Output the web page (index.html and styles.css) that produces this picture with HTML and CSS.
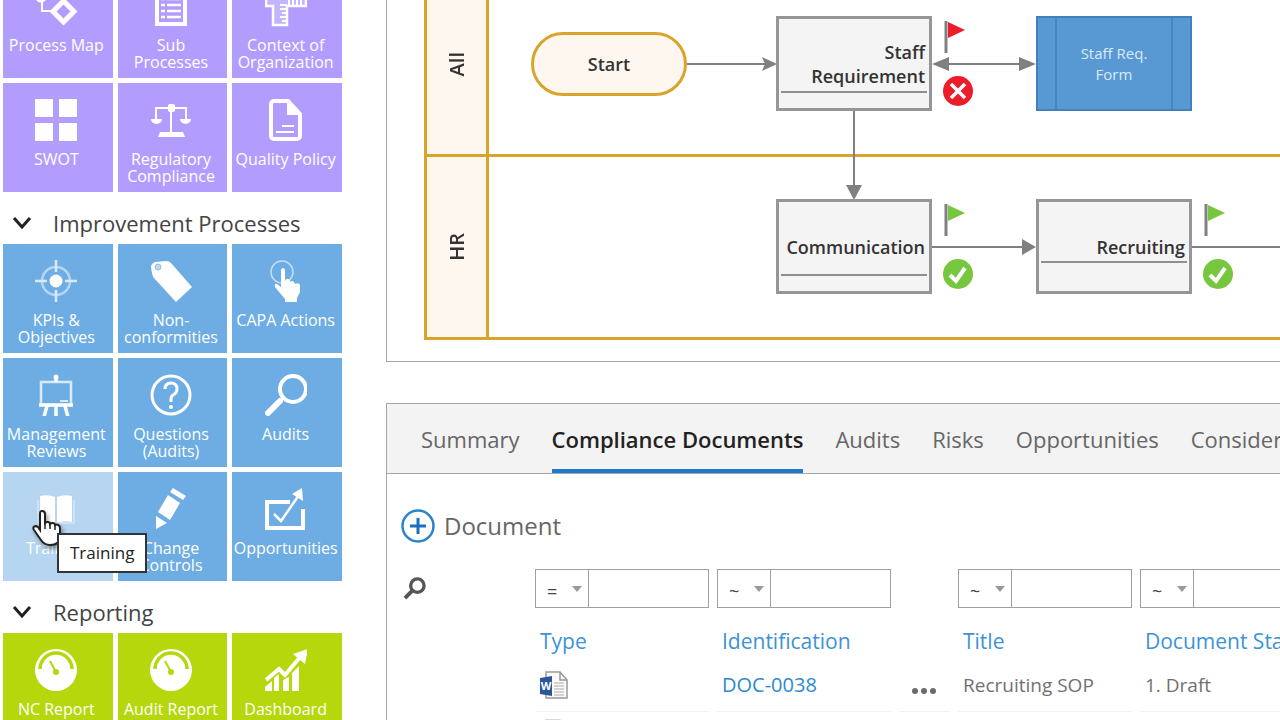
FILE: index.html
```html
<!DOCTYPE html>
<html lang="en">
<head>
    <meta charset="UTF-8">
    <meta name="viewport" content="width=device-width, initial-scale=1.0">
    <title>Process Management</title>
    <link rel="stylesheet" href="styles.css">
</head>
<body>
    <div class="app">
        <nav class="sidebar">
            <div class="tiles purple scrolled">
                <a class="tile" href="#">
                    <svg class="icon" viewBox="0 0 42 42"><circle cx="6" cy="12" r="4" fill="none" stroke="#fff" stroke-width="3"/><path d="M7 17v9h12" fill="none" stroke="#fff" stroke-width="2"/><path d="M28.500 16L39 26.500L28.500 37L18 26.500z" fill="none" stroke="#fff" stroke-width="5"/></svg>
                    <span>Process Map</span>
                </a>
                <a class="tile" href="#">
                    <svg class="icon" viewBox="0 0 42 42"><rect x="7" y="3" width="28" height="36" fill="none" stroke="#fff" stroke-width="4"/><path d="M11 14h4M17 14h14M11 20h4M17 20h14M11 26h4M17 26h14M11 32h4M17 32h14" stroke="#fff" stroke-width="2.500"/></svg>
                    <span>Sub<br>Processes</span>
                </a>
                <a class="tile" href="#">
                    <svg class="icon" viewBox="0 0 42 42"><path d="M1 7h40v14H22v19H8V21H1z" fill="rgba(255,255,255,.25)" stroke="#fff" stroke-width="2.500"/><path d="M15 20h7M15 24h7M17 28h5M15 32h7M17 36h5M24 11v10M28 13v8M32 11v10M36 13v8" stroke="#fff" stroke-width="2"/></svg>
                    <span>Context of<br>Organization</span>
                </a>
                <a class="tile" href="#">
                    <svg class="icon" viewBox="0 0 42 42"><path d="M0 0h18v18H0zM24 0h18v18H24zM0 24h18v18H0zM24 24h18v18H24z" fill="#fff"/></svg>
                    <span>SWOT</span>
                </a>
                <a class="tile" href="#">
                    <svg class="icon" viewBox="0 0 42 42"><path d="M6 20V9h30v11M21 6v29" fill="none" stroke="#fff" stroke-width="2"/><rect x="18" y="5" width="7" height="8" rx="2" fill="#fff"/><path d="M1 20h11a5.500 5 0 0 1-11 0zM30 20h11a5.500 5 0 0 1-11 0zM10 33h23l2 5H8z" fill="#fff"/></svg>
                    <span>Regulatory<br>Compliance</span>
                </a>
                <a class="tile" href="#">
                    <svg class="icon" viewBox="0 0 42 42"><path d="M9 2h14l12 13v22a3 3 0 0 1-3 3H9a3 3 0 0 1-3-3V5a3 3 0 0 1 3-3z" fill="none" stroke="#fff" stroke-width="4"/><path d="M22 2l13 14H22z" fill="#fff"/><path d="M17 27h12M11 33h18" stroke="#fff" stroke-width="2"/></svg>
                    <span>Quality Policy</span>
                </a>
            </div>

            <button class="group" type="button">
                <svg class="chevron" viewBox="0 0 20 14"><path d="M2 2l8 9 8-9" fill="none" stroke="#222" stroke-width="3"/></svg>
                Improvement Processes
            </button>
            <div class="tiles blue">
                <a class="tile" href="#">
                    <svg class="icon" viewBox="0 0 42 42"><circle cx="21" cy="21" r="14" fill="none" stroke="#b7d6f3" stroke-width="2.500"/><path d="M21 0v12M21 30v12M0 21h12M30 21h12" stroke="#d8e9f9" stroke-width="2.500"/><circle cx="21" cy="21" r="6.500" fill="#fff"/></svg>
                    <span>KPIs &amp;<br>Objectives</span>
                </a>
                <a class="tile" href="#">
                    <svg class="icon" viewBox="0 0 42 42"><path d="M1 7Q1 4 5 2l11-1q3 0 5 2l21 24-16 15L4 18q-2-2-3-11z" fill="#fff"/><circle cx="8" cy="7" r="3" fill="#b9d8f3" stroke="#8fc0eb"/></svg>
                    <span>Non-<br>conformities</span>
                </a>
                <a class="tile" href="#">
                    <svg class="icon" viewBox="0 0 42 42"><circle cx="17" cy="12" r="11" fill="none" stroke="#c3ddf5" stroke-width="1.500"/><path d="M18 8q2 0 2 3v10q1-3 3-2 2 0 2 3 2-2 4 0l1 2q4-2 5 1v7l-3 6v4H20v-3L10 27q-1-4 2-3l4 3V11q0-3 2-3z" fill="#fff"/></svg>
                    <span>CAPA Actions</span>
                </a>
                <a class="tile" href="#">
                    <svg class="icon" viewBox="0 0 42 42"><path d="M6 8h30v23H6z" fill="none" stroke="#d8e9f9" stroke-width="2.500"/><path d="M25 27h8" stroke="#d8e9f9" stroke-width="2"/><circle cx="21" cy="3" r="2.500" fill="#fff"/><path d="M21 4v4M4 31h34M12 32l-3 11M21 32v10M30 32l3 11" stroke="#fff" stroke-width="3.500"/></svg>
                    <span>Management<br>Reviews</span>
                </a>
                <a class="tile" href="#">
                    <svg class="icon" viewBox="0 0 42 42"><circle cx="21" cy="21" r="19" fill="none" stroke="#fff" stroke-width="3"/><path d="M15 15q0-6 6-6t6 6q0 4-4 6-2 1-2 5v2" fill="none" stroke="#fff" stroke-width="3"/><circle cx="21" cy="33" r="2" fill="#fff"/></svg>
                    <span>Questions<br>(Audits)</span>
                </a>
                <a class="tile" href="#">
                    <svg class="icon" viewBox="0 0 42 42"><circle cx="28" cy="15" r="13" fill="none" stroke="#fff" stroke-width="4"/><path d="M3 39l12-12" stroke="#fff" stroke-width="6" stroke-linecap="round"/><path d="M15 27l4-4" stroke="#fff" stroke-width="3"/></svg>
                    <span>Audits</span>
                </a>
                <a class="tile hovered" href="#">
                    <svg class="icon" viewBox="0 0 42 42"><path d="M5 8q8-2 15 1v26q-7-3-15-1zM22 9q7-3 15-1v26q-8-2-15 1z" fill="#fff"/><path d="M3 12v23h36V12" fill="none" stroke="#d3e6f7" stroke-width="1.500"/></svg>
                    <span>Training</span>
                    <svg class="pointer" viewBox="0 0 30 38"><path d="M10 2c2 0 3 1 3 3v9c2-2 5-1 5 1 2-2 5-1 5 1 2-1 5 0 5 3v8c0 6-4 9-10 9-5 0-7-2-9-5L2 21c-2-3 1-5 4-3l2 3V5c0-2 0-3 2-3z" fill="#fff" stroke="#222" stroke-width="2"/><path d="M13 13v7M18 14v6M23 16v5" stroke="#222" stroke-width="1.500"/></svg>
                    <span class="tooltip" role="tooltip">Training</span>
                </a>
                <a class="tile" href="#">
                    <svg class="icon" viewBox="0 0 42 42"><path d="M23 0l13 8-3 4-13-8zM18 7l12 8-10 17-12-8zM6 28l11 7-11 6z" fill="#fff"/></svg>
                    <span>Change<br>Controls</span>
                </a>
                <a class="tile" href="#">
                    <svg class="icon" viewBox="0 0 42 42"><path d="M25 14H2v26h36V21" fill="none" stroke="#fff" stroke-width="4"/><path d="M9 26l7 7L34 7" fill="none" stroke="#fff" stroke-width="2.500"/><path d="M37 0l1 13-11-7z" fill="#fff"/></svg>
                    <span>Opportunities</span>
                </a>
            </div>

            <button class="group" type="button">
                <svg class="chevron" viewBox="0 0 20 14"><path d="M2 2l8 9 8-9" fill="none" stroke="#222" stroke-width="3"/></svg>
                Reporting
            </button>
            <div class="tiles green">
                <a class="tile" href="#">
                    <svg class="icon" viewBox="0 0 42 42"><circle cx="21" cy="21" r="21" fill="#fff"/><path d="M5 20a16 16 0 0 1 32 0" fill="none" stroke="#b5d70b" stroke-width="3.500"/><path d="M15 12l6 11" stroke="#b5d70b" stroke-width="2"/><circle cx="21" cy="23" r="3" fill="#b5d70b"/></svg>
                    <span>NC Report</span>
                </a>
                <a class="tile" href="#">
                    <svg class="icon" viewBox="0 0 42 42"><circle cx="21" cy="21" r="21" fill="#fff"/><path d="M5 20a16 16 0 0 1 32 0" fill="none" stroke="#b5d70b" stroke-width="3.500"/><path d="M15 12l6 11" stroke="#b5d70b" stroke-width="2"/><circle cx="21" cy="23" r="3" fill="#b5d70b"/></svg>
                    <span>Audit Report</span>
                </a>
                <a class="tile" href="#">
                    <svg class="icon" viewBox="0 0 42 42"><path d="M1 31l13-11 6 6L36 7" fill="none" stroke="#fff" stroke-width="4"/><path d="M43 0l-3 15L28 5zM0 38l7-6v11H0zM9 29l5-4v18H9zM18 31l6-3v15h-6zM27 24l7-7v26h-7z" fill="#fff"/></svg>
                    <span>Dashboard</span>
                </a>
            </div>
        </nav>

        <main class="content">
            <section class="diagram">
                <div class="lane"><div class="lane-name"><span>All</span></div></div>
                <div class="lane"><div class="lane-name"><span>HR</span></div></div>

                <!-- connectors -->
                <svg class="links" viewBox="0 0 900 340" width="900" height="340">
                    <g fill="none" stroke="#808080" stroke-width="2">
                        <path d="M300 64h78M556 64h82M467 111v78M545 247h92M804 247h96"/>
                    </g>
                    <path d="M390 64l-15-7 3 7-3 7zM545 64l17-7v14zM649 64l-17-7v14zM467 200l-8-15h16zM649 247l-14-8v16z" fill="#808080"/>
                </svg>

                <div class="node start">Start</div>
                <div class="node task requirement">Staff<br>Requirement</div>
                <div class="node form">Staff Req.<br>Form</div>
                <div class="node task communication">Communication</div>
                <div class="node task recruiting">Recruiting</div>

                <svg class="status status-1" viewBox="0 0 30 88"><path d="M3 3v32" stroke="#808080" stroke-width="3"/><path d="M5 4l17 8-17 8z" fill="#ec1c2a"/><circle cx="15" cy="73" r="15" fill="#ec1c2a"/><path d="M8 66l14 14M22 66L8 80" stroke="#fff" stroke-width="3.500"/></svg>
                <svg class="status status-2" viewBox="0 0 30 88"><path d="M3 3v32" stroke="#808080" stroke-width="3"/><path d="M5 4l17 8-17 8z" fill="#76c63e"/><circle cx="15" cy="73" r="15" fill="#76c63e"/><path d="M7 74l6 6 9-13" fill="none" stroke="#fff" stroke-width="4"/></svg>
                <svg class="status status-3" viewBox="0 0 30 88"><path d="M3 3v32" stroke="#808080" stroke-width="3"/><path d="M5 4l17 8-17 8z" fill="#76c63e"/><circle cx="15" cy="73" r="15" fill="#76c63e"/><path d="M7 74l6 6 9-13" fill="none" stroke="#fff" stroke-width="4"/></svg>
            </section>

            <section class="details">
                <nav class="tabs">
                    <a href="#">Summary</a>
                    <a href="#" class="active">Compliance Documents</a>
                    <a href="#">Audits</a>
                    <a href="#">Risks</a>
                    <a href="#">Opportunities</a>
                    <a href="#">Considerations</a>
                </nav>
                <button class="add" type="button">
                    <svg class="plus" viewBox="0 0 34 34"><circle cx="17" cy="17" r="15.500" fill="none" stroke="#2b83cb" stroke-width="2.500"/><path d="M17 9v16M9 17h16" stroke="#1b6fc0" stroke-width="3"/></svg>
                    Document
                </button>
                <table class="docs">
                    <colgroup>
                        <col class="col-tools">
                        <col class="col-field">
                        <col class="col-field">
                        <col class="col-more">
                        <col class="col-field">
                        <col class="col-field">
                    </colgroup>
                    <thead>
                        <tr class="filters">
                            <td><button class="search" type="button" aria-label="Search"><svg viewBox="0 0 24 24"><circle cx="15" cy="9" r="7" fill="none" stroke="#555" stroke-width="3.500"/><path d="M10 14l-8 8" stroke="#555" stroke-width="4"/></svg></button></td>
                            <td><div class="filter"><select aria-label="Type operator"><option>=</option></select><input type="text" aria-label="Type filter"></div></td>
                            <td><div class="filter"><select aria-label="Identification operator"><option>~</option></select><input type="text" aria-label="Identification filter"></div></td>
                            <td></td>
                            <td><div class="filter"><select aria-label="Title operator"><option>~</option></select><input type="text" aria-label="Title filter"></div></td>
                            <td><div class="filter"><select aria-label="Status operator"><option>~</option></select><input type="text" aria-label="Status filter"></div></td>
                        </tr>
                        <tr class="heads">
                            <td></td>
                            <th scope="col">Type</th>
                            <th scope="col">Identification</th>
                            <td></td>
                            <th scope="col">Title</th>
                            <th scope="col">Document Status</th>
                        </tr>
                    </thead>
                    <tbody>
                        <tr>
                            <td></td>
                            <td><svg class="word" viewBox="0 0 28 28"><path d="M6 1h14l7 8v18H6z" fill="#fafafa" stroke="#999" stroke-width="1.500"/><path d="M20 1v8h7" fill="none" stroke="#999" stroke-width="1.500"/><path d="M14 12h10M14 15h10M14 18h10M14 21h10M14 24h10" stroke="#aaa"/><path d="M0 7l12-2v20L0 23z" fill="#2b579a"/><text x="6" y="19" class="word-mark">W</text></svg></td>
                            <td><a href="#">DOC-0038</a></td>
                            <td><button class="more" type="button" aria-label="More"><svg viewBox="0 0 24 6"><g fill="#6b6b6b"><circle cx="3" cy="3" r="3"/><circle cx="12" cy="3" r="3"/><circle cx="21" cy="3" r="3"/></g></svg></button></td>
                            <td>Recruiting SOP</td>
                            <td>1. Draft</td>
                        </tr>
                        <tr>
                            <td></td>
                            <td><svg class="word" viewBox="0 0 28 28"><path d="M6 1h14l7 8v18H6z" fill="#fafafa" stroke="#ccc" stroke-width="1.500"/></svg></td>
                            <td></td>
                            <td></td>
                            <td></td>
                            <td></td>
                        </tr>
                    </tbody>
                </table>
            </section>
        </main>
    </div>
</body>
</html>
```

FILE: styles.css
```css
* {
    box-sizing: border-box;
}
body {
    margin: 0;
    background: #fff;
    color: #444;
    font-family: "Open Sans", "Noto Sans", sans-serif;
    overflow: hidden;
}
a {
    text-decoration: none;
}
button {
    border: none;
    background: none;
    padding: 0;
    font-family: inherit;
    cursor: pointer;
}
.app {
    display: flex;
    gap: 44px;
    height: 100vh;
    overflow: hidden;
}

/* sidebar */
.sidebar {
    flex: 0 0 342px;
    padding-left: 3px;
}
.tiles {
    display: grid;
    grid-template-columns: repeat(3, 1fr);
    gap: 5px;
}
.tiles.scrolled {
    margin-top: -31px;
}
.tile {
    display: flex;
    flex-direction: column;
    align-items: center;
    gap: 10px;
    height: 109px;
    padding: 16px 3px 0 0;
    position: relative;
    color: #fff;
    font-size: 16px;
    line-height: 17px;
    text-align: center;
    white-space: nowrap;
}
.purple .tile { background: #b29dff; }
.blue .tile { background: #6eade3; }
.green .tile { background: #b5d70b; }
.blue .tile.hovered { background: #b6d5f1; }
.icon {
    width: 42px;
    height: 42px;
}
.group {
    display: flex;
    align-items: center;
    gap: 21px;
    width: 100%;
    height: 52px;
    padding: 10px 0 0 9px;
    color: #444;
    font-size: 22px;
    line-height: 42px;
}
.chevron {
    width: 20px;
    height: 14px;
}

/* hover state of the tile */
.pointer {
    position: absolute;
    left: 29px;
    top: 37px;
    width: 30px;
    height: 38px;
    z-index: 2;
    filter: drop-shadow(2px 3px 2px rgba(0, 0, 0, 0.4));
}
.tooltip {
    position: absolute;
    left: 54px;
    top: 61px;
    z-index: 3;
    padding: 0 11px;
    background: #fff;
    border: 2px solid #333;
    color: #222;
    font-size: 17px;
    line-height: 36px;
}

/* process diagram */
.content {
    flex: 1;
    min-width: 0;
}
.diagram {
    position: relative;
    padding: 0 0 21px 37px;
    border: solid #a6a6a6;
    border-width: 0 0 1px 1px;
    overflow: hidden;
}
.lane {
    display: flex;
    height: 183px;
    border: solid #d8a52c;
    border-width: 0 0 3px 3px;
}
.lane:first-child {
    margin-top: -26px;
}
.lane-name {
    display: flex;
    align-items: center;
    justify-content: center;
    width: 62px;
    background: #fef7f0;
    border-right: 3px solid #d8a52c;
    color: #333;
    font-size: 20px;
    font-weight: 600;
}
.lane-name span {
    writing-mode: vertical-rl;
    transform: rotate(180deg);
}
.links {
    position: absolute;
    left: 0;
    top: 0;
}
.node {
    position: absolute;
    display: flex;
    align-items: center;
    width: 156px;
    height: 95px;
    color: #333;
    font-size: 18px;
    font-weight: 600;
    line-height: 24px;
}
.start {
    left: 144px;
    top: 32px;
    height: 64px;
    justify-content: center;
    background: #fef7f0;
    border: 3px solid #d8a52c;
    border-radius: 32px;
}
.task {
    justify-content: flex-end;
    padding-right: 4px;
    background: #f4f4f5;
    border: 3px solid #969696;
    text-align: right;
}
.task::after {
    content: '';
    position: absolute;
    left: 2px;
    right: 2px;
    bottom: 15px;
    height: 2px;
    background: #8f8f8f;
}
.requirement {
    left: 389px;
    top: 16px;
}
.communication {
    left: 389px;
    top: 199px;
}
.recruiting {
    left: 649px;
    top: 199px;
}
.recruiting::after {
    bottom: 28px;
}
.form {
    left: 649px;
    top: 16px;
    justify-content: center;
    background: #5899d3;
    border: 2px solid #3f80bd;
    color: #d9ebfa;
    font-size: 15px;
    font-weight: 400;
    line-height: 21px;
    text-align: center;
}
.form::before {
    content: '';
    position: absolute;
    inset: 0 17px;
    border: solid #4486c3;
    border-width: 0 2px;
}
.status {
    position: absolute;
    width: 30px;
    height: 88px;
}
.status-1 { left: 556px; top: 18px; }
.status-2 { left: 556px; top: 201px; }
.status-3 { left: 816px; top: 201px; }

/* details panel */
.details {
    margin-top: 41px;
    height: 400px;
    border: solid #a6a6a6;
    border-width: 1px 0 0 1px;
    overflow: hidden;
}
.tabs {
    display: flex;
    gap: 32px;
    height: 70px;
    padding-left: 34px;
    background: #f3f3f3;
    border-bottom: 1px solid #a6a6a6;
    white-space: nowrap;
}
.tabs a {
    border-bottom: 4px solid transparent;
    color: #666;
    font-size: 22px;
    line-height: 70px;
}
.tabs a.active {
    border-color: #1e78cc;
    color: #222;
    font-weight: 600;
}
.add {
    display: flex;
    align-items: center;
    gap: 9px;
    margin: 32px 0 0 14px;
    color: #666;
    font-size: 24px;
    line-height: 40px;
}
.plus {
    width: 34px;
    height: 34px;
}
.docs {
    width: 929px;
    margin: 23px 0 0 6px;
    table-layout: fixed;
    border-collapse: separate;
    border-spacing: 8px 0;
    color: #707070;
    font-size: 19px;
}
.col-tools { width: 126px; }
.col-field { width: 174px; }
.col-more { width: 51px; }
.docs td,
.docs th {
    padding: 0;
    text-align: left;
    white-space: nowrap;
}
.docs .heads th {
    padding: 10px 0 0 5px;
    color: #3c93d6;
    font-size: 21px;
    font-weight: 400;
}
.heads {
    height: 56px;
}
.docs tbody td {
    height: 48px;
    padding: 7px 0 0 5px;
    vertical-align: top;
    line-height: 28px;
}
.docs tbody td:not(:first-child) {
    border-bottom: 1px solid #f2f2f2;
}
.docs tbody a {
    color: #2d8ad0;
    font-size: 20px;
}
.search,
.more {
    display: block;
}
.search svg {
    display: block;
    width: 23px;
    height: 23px;
    margin-left: 2px;
}
.more svg {
    display: block;
    width: 24px;
    height: 6px;
    margin: 17px 0 0 8px;
}
.filter {
    display: flex;
    height: 39px;
    border: 1px solid #a0a0a0;
    position: relative;
}
.filter select {
    appearance: none;
    width: 53px;
    padding: 4px 0 0 11px;
    border: none;
    border-right: 1px solid #a0a0a0;
    border-radius: 0;
    background: #fff;
    color: #444;
    font-family: inherit;
    font-size: 18px;
}
.filter input {
    flex: 1;
    min-width: 0;
    padding: 0 6px;
    border: none;
    background: #fff;
    font-family: inherit;
    font-size: 18px;
}
.filter::after {
    content: '';
    position: absolute;
    left: 36px;
    top: 16px;
    border: 5px solid transparent;
    border-top: 6px solid #999;
    border-bottom: none;
    pointer-events: none;
}
.word {
    display: block;
    width: 28px;
    height: 28px;
}
.word-mark {
    fill: #fff;
    font-size: 11px;
    font-weight: 700;
    text-anchor: middle;
}
```
